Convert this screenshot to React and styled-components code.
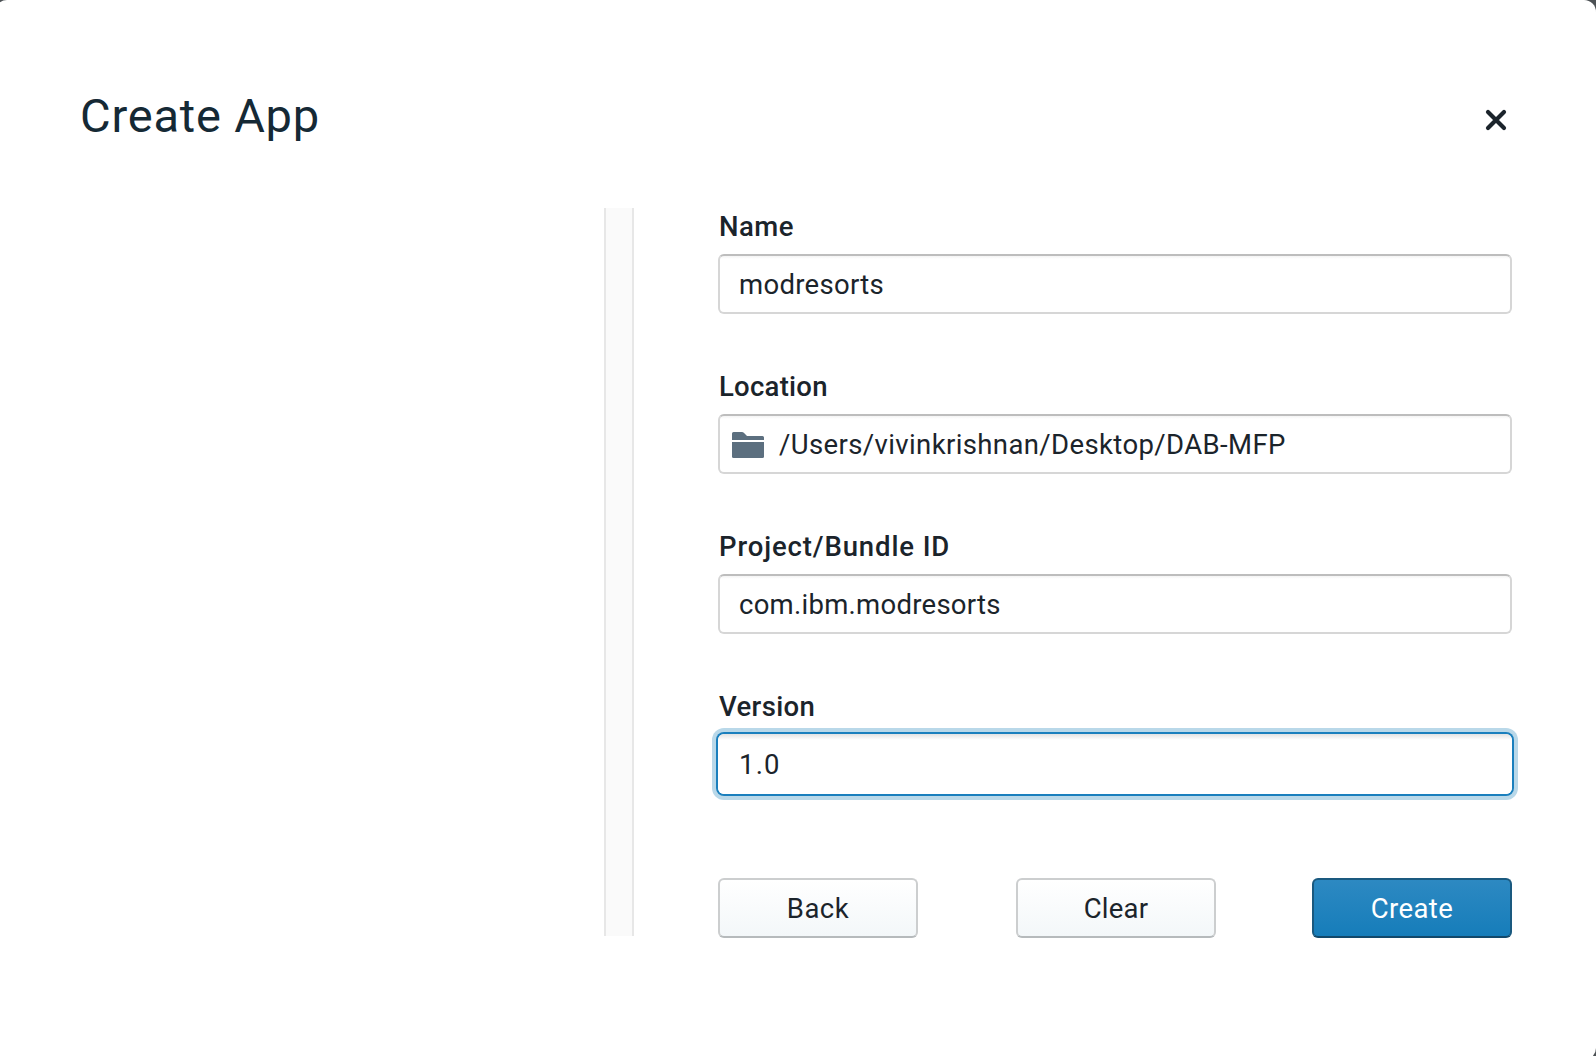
import React from 'react';
import styled, { createGlobalStyle, css } from 'styled-components';

const GlobalStyle = createGlobalStyle`
  *, *::before, *::after { box-sizing: border-box; }
  html, body { margin: 0; height: 100%; overflow: hidden; }
  body {
    background: #4d5255;
    color: #1b242b;
    font-family: Roboto, "Noto Sans", sans-serif;
  }
`;

const Modal = styled.main`
  width: 1601px;
  height: 1060px;
  margin-left: -5px;
  padding: 88px 84px 0 85px;
  border-radius: 12px;
  background: #fff;
`;

const Header = styled.header`
  display: flex;
  justify-content: space-between;
  align-items: flex-start;
  height: 120px;
`;

const Title = styled.h1`
  margin: 0;
  font-size: 47px;
  font-weight: 400;
  line-height: 56px;
  letter-spacing: 0.8px;
  color: #152935;
`;

const CloseButton = styled.button`
  display: flex;
  margin: 20px 4px 0 0;
  padding: 0;
  border: 0;
  background: none;
  color: #1b242b;
`;

const Content = styled.div`
  display: flex;
  align-items: flex-start;
`;

const Preview = styled.section`
  flex: none;
  width: 524px;
  height: 728px;
`;

const Divider = styled.div`
  flex: none;
  width: 30px;
  height: 728px;
  margin-right: 84px;
  border: solid #e7e7e7;
  border-width: 0 2px;
  background: #fafafa;
`;

const Form = styled.form`
  flex: none;
  width: 794px;
`;

const Field = styled.div`
  height: 160px;
`;

const Label = styled.label`
  display: block;
  height: 46px;
  padding: 2px 0 0 1px;
  font-size: 27.5px;
  font-weight: 500;
  line-height: 34px;
  letter-spacing: ${(p) => p.$tracking}px;
`;

const focusRing = css`
  border-color: #fff;
  box-shadow: 0 0 0 2px #1a7fbd, 0 0 0 6px #b9d8e9;
  background: linear-gradient(#e2e2e2, #fff 6px) border-box;
  border-color: transparent;
`;

const Control = styled.div`
  display: flex;
  align-items: center;
  gap: 15px;
  height: 60px;
  padding: 2px ${(p) => (p.$icon ? 12 : 19)}px 0;
  border: 2px solid #d6d6d6;
  border-top-color: #bdbdbd;
  border-radius: 6px;
  background: linear-gradient(#f4f4f4, #fff 3px);
  font-size: 27.5px;
  line-height: 36px;
  ${(p) => p.$focused && focusRing}
`;

const Value = styled.span`
  letter-spacing: ${(p) => p.$tracking}px;
  white-space: nowrap;
`;

const Actions = styled.div`
  display: grid;
  grid-template-columns: 298px 296px 200px;
  margin-top: 30px;
`;

const Button = styled.button`
  width: 200px;
  height: 60px;
  padding: 2px 0 0;
  border: 2px solid ${(p) => (p.$primary ? '#1a597f' : '#cccecf')};
  border-bottom-color: ${(p) => (p.$primary ? '#12496b' : '#b6babc')};
  border-radius: 6px;
  background: ${(p) =>
    p.$primary ? 'linear-gradient(#2d89c2, #167dba)' : 'linear-gradient(#fff, #f3f7f9)'};
  color: ${(p) => (p.$primary ? '#fff' : '#1b242b')};
  font: 400 27.5px/36px Roboto, "Noto Sans", sans-serif;
  letter-spacing: ${(p) => p.$tracking}px;
`;

const CloseIcon = () => (
  <svg width="24" height="24" viewBox="0 0 24 24" aria-hidden="true">
    <path d="M4 4 20 20M20 4 4 20" fill="none" stroke="currentColor" strokeWidth="4.2" strokeLinecap="round" />
  </svg>
);

const FolderIcon = () => (
  <svg width="32" height="26" viewBox="0 0 32 26" fill="#5c6f7f" aria-hidden="true">
    <path d="M0 8V1.5Q0 0 1.5 0H10Q11 0 11.8.8L15 4H30.5Q32 4 32 5.5V8Z" />
    <path d="M0 10H32V24.5Q32 26 30.5 26H1.5Q0 26 0 24.5Z" />
  </svg>
);

const fields = [
  { label: 'Name', labelTracking: 0.5, value: 'modresorts', tracking: 0.3 },
  { label: 'Location', labelTracking: 0.25, value: '/Users/vivinkrishnan/Desktop/DAB-MFP', tracking: 0.385, icon: true },
  { label: 'Project/Bundle ID', labelTracking: 0.88, value: 'com.ibm.modresorts', tracking: 0.27 },
  { label: 'Version', labelTracking: 0.35, value: '1.0', tracking: 1.2, focused: true },
];

const actions = [
  { label: 'Back', tracking: 0.5 },
  { label: 'Clear', tracking: 0.2 },
  { label: 'Create', tracking: 0.4, primary: true },
];

export default function App() {
  return (
    <>
      <GlobalStyle />
      <Modal>
        <Header>
          <Title>Create App</Title>
          <CloseButton aria-label="Close"><CloseIcon /></CloseButton>
        </Header>
        <Content>
          <Preview />
          <Divider />
          <Form>
            {fields.map((f) => (
              <Field key={f.label}>
                <Label $tracking={f.labelTracking}>{f.label}</Label>
                <Control $icon={f.icon} $focused={f.focused}>
                  {f.icon && <FolderIcon />}
                  <Value $tracking={f.tracking}>{f.value}</Value>
                </Control>
              </Field>
            ))}
            <Actions>
              {actions.map((a) => (
                <Button key={a.label} type="button" $primary={a.primary} $tracking={a.tracking}>
                  {a.label}
                </Button>
              ))}
            </Actions>
          </Form>
        </Content>
      </Modal>
    </>
  );
}
